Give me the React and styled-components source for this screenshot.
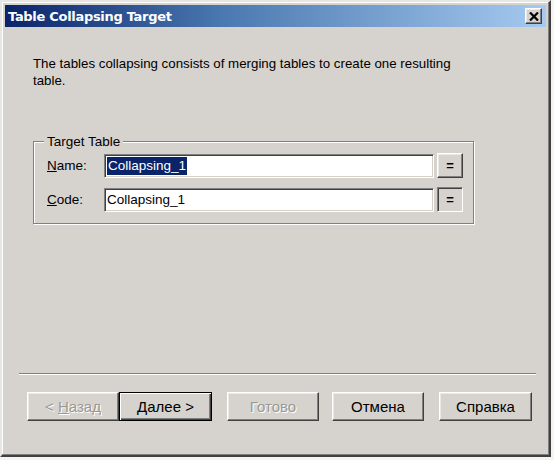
import React from 'react';
import styled, { createGlobalStyle, css } from 'styled-components';

const GlobalStyle = createGlobalStyle`
    html, body {
        margin: 0;
        padding: 0;
        background: #f4f4f2;
    }
    body {
        font-family: "Liberation Sans", Arial, sans-serif;
    }
`;

const raised = css`
    border-style: solid;
    border-width: 1px;
    border-color: #ffffff #404040 #404040 #ffffff;
    box-shadow: inset -1px -1px 0 #808080, inset 1px 1px 0 #ece9e2;
`;

const sunken = css`
    border-style: solid;
    border-width: 1px;
    border-color: #808080 #ffffff #ffffff #808080;
    box-shadow: inset 1px 1px 0 #404040, inset -1px -1px 0 #d4d0c8;
`;

const Dialog = () => {
    return (
        <Window>
            <TitleBar>
                <Title>Table Collapsing Target</Title>
                <CloseButton>
                    <svg width="10" height="9" viewBox="0 0 10 9">
                        <path d="M1 0.5 L9 8.5 M9 0.5 L1 8.5" stroke="#000" strokeWidth="2.2" />
                    </svg>
                </CloseButton>
            </TitleBar>
            <Body>
                <Description>
                    The tables collapsing consists of merging tables to create one resulting table.
                </Description>
                <GroupBox>
                    <Legend>Target Table</Legend>
                    <Row>
                        <Label><u>N</u>ame:</Label>
                        <Field>
                            <Selected>Collapsing_1</Selected>
                        </Field>
                        <EqButton>=</EqButton>
                    </Row>
                    <Row>
                        <Label><u>C</u>ode:</Label>
                        <Field>Collapsing_1</Field>
                        <EqButton $pressed>=</EqButton>
                    </Row>
                </GroupBox>
                <Spacer />
                <Separator />
                <Buttons>
                    <PushButton $disabled>{'< '}<u>Н</u>азад</PushButton>
                    <PushButton $isDefault $wide><u>Д</u>алее {'>'}</PushButton>
                    <PushButton $disabled $gap={15}>Готово</PushButton>
                    <PushButton $gap={13}>Отмена</PushButton>
                    <PushButton $gap={15} $wide>Справка</PushButton>
                </Buttons>
            </Body>
        </Window>
    );
};

const Window = styled.div`
    box-sizing: border-box;
    width: 551px;
    height: 457px;
    display: flex;
    flex-direction: column;
    background: #d6d3ce;
    border-style: solid;
    border-width: 2px;
    border-color: #e8e6e2 #404040 #404040 #e8e6e2;
    box-shadow: inset -1px -1px 0 #808080, inset 1px 1px 0 #ffffff;
    padding: 3px;
`;

const TitleBar = styled.div`
    height: 22px;
    display: flex;
    align-items: center;
    justify-content: space-between;
    padding: 0 4px 0 3px;
    background: linear-gradient(to right, #0a246a 0%, #4a78b0 40%, #a6caf0 100%);
`;

const Title = styled.span`
    color: #ffffff;
    font-weight: bold;
    font-size: 13px;
    font-family: "DejaVu Sans", Verdana, sans-serif;
    letter-spacing: -0.3px;
`;

const CloseButton = styled.div`
    box-sizing: border-box;
    width: 17px;
    height: 16px;
    display: flex;
    align-items: center;
    justify-content: center;
    background: #d6d3ce;
    ${raised};
`;

const Body = styled.div`
    flex: 1;
    display: flex;
    flex-direction: column;
    padding: 28px 14px 31px 14px;
`;

const Description = styled.p`
    margin: 0 0 0 14px;
    width: 440px;
    font-size: 13.3px;
    line-height: 17px;
    color: #000;
`;

const GroupBox = styled.div`
    position: relative;
    box-sizing: border-box;
    margin: 52px 0 0 14px;
    width: 441px;
    height: 83px;
    border: 1px solid #808080;
    box-shadow: 1px 1px 0 #ffffff, inset 1px 1px 0 #ffffff;
    padding: 11px 9px 0 13px;
    display: flex;
    flex-direction: column;
    gap: 9px;
`;

const Legend = styled.span`
    position: absolute;
    top: -8px;
    left: 10px;
    padding: 0 3px;
    background: #d6d3ce;
    font-size: 13.5px;
    line-height: 15px;
    color: #000;
`;

const Row = styled.div`
    display: flex;
    align-items: center;
`;

const Label = styled.span`
    width: 57px;
    font-size: 13.5px;
    color: #000;
`;

const Field = styled.div`
    box-sizing: border-box;
    width: 330px;
    height: 24px;
    display: flex;
    align-items: center;
    padding-left: 2px;
    background: #ffffff;
    font-size: 13.5px;
    color: #000;
    ${sunken};
`;

const Selected = styled.span`
    background: #0a246a;
    color: #ffffff;
    padding: 1px 1px;
    line-height: 16px;
`;

const EqButton = styled.div`
    box-sizing: border-box;
    width: 26px;
    height: 25px;
    margin-left: 3px;
    display: flex;
    align-items: center;
    justify-content: center;
    font-size: 13px;
    font-weight: bold;
    color: #000;
    ${({ $pressed }) => ($pressed ? sunken : raised)};
    ${({ $pressed }) => $pressed && css`box-shadow: inset 1px 1px 0 #404040;`};
`;

const Spacer = styled.div`
    flex: 1;
`;

const Separator = styled.div`
    height: 1px;
    background: #808080;
    border-bottom: 1px solid #ffffff;
    margin: 0 0 17px 0;
    width: 517px;
`;

const Buttons = styled.div`
    display: flex;
    padding-left: 8px;
`;

const PushButton = styled.div`
    box-sizing: border-box;
    width: ${({ $wide }) => ($wide ? 94 : 93)}px;
    height: 29px;
    margin-left: ${({ $gap }) => $gap || 0}px;
    display: flex;
    align-items: center;
    justify-content: center;
    white-space: pre;
    font-size: 15px;
    color: #000;
    ${raised};
    ${({ $isDefault }) => $isDefault && css`
        border: 1px solid #000;
        box-shadow: inset 1px 1px 0 #ffffff, inset -1px -1px 0 #404040, inset -2px -2px 0 #808080;
    `};
    ${({ $disabled }) => $disabled && css`
        color: #9a9893;
        text-shadow: 1px 1px 0 #ffffff;
    `};
`;

export default function App() {
    return (
        <>
            <GlobalStyle />
            <Dialog />
        </>
    );
}
